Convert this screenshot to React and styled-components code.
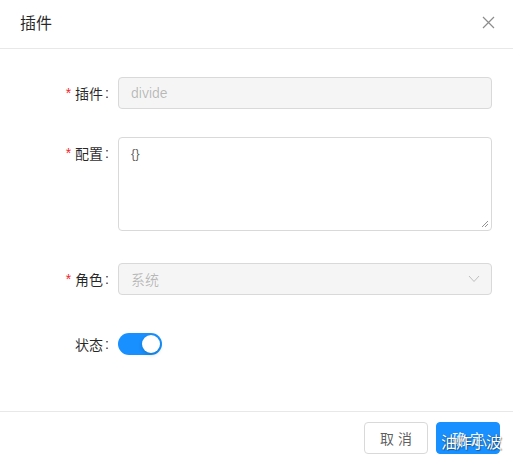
import React from "react";
import styled, { createGlobalStyle } from "styled-components";

const Global = createGlobalStyle`
  html, body { margin: 0; padding: 0; background: #fff; }
  body { font-family: "Liberation Sans", "Noto Sans CJK SC", sans-serif; font-size: 14px; color: rgba(0,0,0,0.85); }
  * { box-sizing: border-box; }
`;

const Modal = styled.div`
  position: relative;
  width: 513px;
  height: 461px;
  display: flex;
  flex-direction: column;
  background: #fff;
`;

const Header = styled.div`
  height: 49px;
  display: flex;
  align-items: center;
  justify-content: space-between;
  padding: 0 18px 4px 20px;
  border-bottom: 1px solid #e8e8e8;
`;

const Title = styled.div`
  font-size: 16px;
  color: rgba(0,0,0,0.85);
`;

const Close = styled.button`
  border: 0;
  background: none;
  padding: 0;
  width: 14px;
  height: 14px;
  display: flex;
  align-items: center;
  justify-content: center;
`;

const Body = styled.div`
  flex: 1;
  padding: 28px 21px 0 0;
`;

const Item = styled.div`
  display: grid;
  grid-template-columns: 118px 1fr;
  margin-bottom: ${p => p.$mb}px;
`;

const Label = styled.label`
  height: 32px;
  display: flex;
  align-items: center;
  justify-content: flex-end;
  color: rgba(0,0,0,0.85);
  white-space: nowrap;
`;

const Colon = styled.span`
  margin: 0 9px 0 2px;
`;

const Star = styled.span`
  color: #f5222d;
  margin-right: 4px;
  font-size: 14px;
`;

const Input = styled.div`
  height: 32px;
  border: 1px solid #d9d9d9;
  border-radius: 4px;
  background: #f5f5f5;
  color: rgba(0,0,0,0.25);
  display: flex;
  align-items: center;
  justify-content: space-between;
  padding: 0 11px 0 12px;
`;

const TextArea = styled.div`
  position: relative;
  height: 94px;
  border: 1px solid #d9d9d9;
  border-radius: 4px;
  background: #fff;
  padding: 5px 12px;
  color: rgba(0,0,0,0.65);
  font-size: 13px;
  line-height: 22px;
`;

const Grip = styled.svg`
  position: absolute;
  right: 2px;
  bottom: 2px;
`;

const SwitchWrap = styled.div`
  height: 32px;
  display: flex;
  align-items: center;
`;

const Switch = styled.button`
  width: 44px;
  height: 22px;
  border-radius: 11px;
  border: 0;
  background: #1890ff;
  padding: 2px;
  display: flex;
  justify-content: flex-end;
`;

const Knob = styled.span`
  width: 18px;
  height: 18px;
  border-radius: 50%;
  background: #fff;
  box-shadow: 0 2px 4px rgba(0,35,11,0.2);
`;

const Footer = styled.div`
  height: 50px;
  border-top: 1px solid #e8e8e8;
  display: flex;
  justify-content: flex-end;
  align-items: flex-start;
  gap: 8px;
  padding: 10px 13px 0 0;
`;

const Button = styled.button`
  height: 32px;
  width: ${p => p.$w}px;
  border-radius: 4px;
  font-family: "Liberation Sans", "Noto Sans CJK SC", sans-serif;
  font-size: 14px;
  border: 1px solid ${p => (p.$primary ? "#1890ff" : "#d9d9d9")};
  background: ${p => (p.$primary ? "#1890ff" : "#fff")};
  color: ${p => (p.$primary ? "#fff" : "rgba(0,0,0,0.65)")};
  padding: 0;
`;

const Watermark = styled.div`
  position: absolute;
  left: 441px;
  top: 429px;
  font-size: 16px;
  color: #fff;
  letter-spacing: -1px;
  text-shadow: 0 0 1px rgba(0,0,0,0.6), 1px 1px 1px rgba(0,0,0,0.35);
  pointer-events: none;
`;

export default function App() {
  return (
    <Modal>
      <Global />
      <Header>
        <Title>插件</Title>
        <Close aria-label="close">
          <svg width="13" height="13" viewBox="0 0 13 13">
            <path d="M1 1 L12 12 M12 1 L1 12" stroke="#8c8c8c" strokeWidth="1.2" fill="none" />
          </svg>
        </Close>
      </Header>
      <Body>
        <Item $mb={28}>
          <Label><Star>*</Star>插件<Colon>:</Colon></Label>
          <Input>divide</Input>
        </Item>
        <Item $mb={32}>
          <Label><Star>*</Star>配置<Colon>:</Colon></Label>
          <TextArea>
            {"{}"}
            <Grip width="8" height="8" viewBox="0 0 8 8">
              <path d="M7 1 L1 7 M7 4 L4 7" stroke="#777" strokeWidth="0.8" />
            </Grip>
          </TextArea>
        </Item>
        <Item $mb={33}>
          <Label><Star>*</Star>角色<Colon>:</Colon></Label>
          <Input>
            系统
            <svg width="12" height="8" viewBox="0 0 12 8">
              <path d="M1 1 L6 6.5 L11 1" stroke="#bfbfbf" strokeWidth="1" fill="none" />
            </svg>
          </Input>
        </Item>
        <Item $mb={0}>
          <Label>状态<Colon>:</Colon></Label>
          <SwitchWrap>
            <Switch><Knob /></Switch>
          </SwitchWrap>
        </Item>
      </Body>
      <Footer>
        <Button $w={64}>取 消</Button>
        <Button $w={64} $primary>确 定</Button>
      </Footer>
      <Watermark>油炸小波</Watermark>
    </Modal>
  );
}
